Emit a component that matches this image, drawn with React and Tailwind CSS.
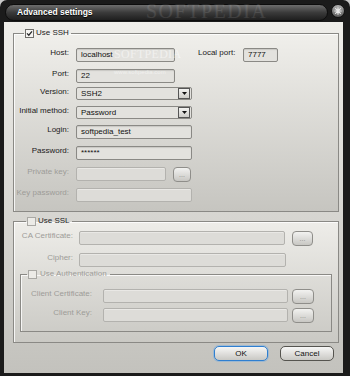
import React from "react";

function Checkbox({ checked, disabled }) {
  return (
    <span
      className={`inline-flex w-[9px] h-[9px] border items-center justify-center shrink-0 ${
        disabled ? "border-[#a9a8a4] bg-[#ecebe7]" : "border-[#6f6e6a] bg-[#f6f5f2]"
      }`}
    >
      {checked && (
        <svg width="7" height="7" viewBox="0 0 7 7">
          <path d="M1 3.4 L2.8 5.2 L6 1.4" stroke="#2a2a2a" strokeWidth="1.3" fill="none" />
        </svg>
      )}
    </span>
  );
}

function Input({ className, text, disabled }) {
  return (
    <div
      className={`h-[14px] border rounded-[2px] flex items-center pl-[4px] leading-[12px] text-[#111] shrink-0 ${
        disabled
          ? "border-[#b3b2ae] bg-[#dddcd8] shadow-[inset_0_1px_0_rgba(255,255,255,0.35)]"
          : "border-[#8a8985] bg-[#e3e2de] shadow-[inset_0_1px_1px_rgba(0,0,0,0.12)]"
      } ${className}`}
    >
      {text}
    </div>
  );
}

function Select({ text }) {
  return (
    <div className="w-[116px] h-[13px] border border-[#8a8985] rounded-[2px] bg-[#e3e2de] flex items-center pl-[4px] pr-[1px] leading-[11px] text-[#111] shrink-0">
      <span className="flex-1">{text}</span>
      <span className="w-[12px] h-[11px] border border-[#555] bg-gradient-to-b from-[#f3f3f1] to-[#cdccc8] flex items-center justify-center">
        <svg width="5" height="3" viewBox="0 0 5 3">
          <path d="M0 0h5L2.5 3z" fill="#111" />
        </svg>
      </span>
    </div>
  );
}

function Browse({ className }) {
  return (
    <div
      className={`h-[15px] rounded-[4px] border border-[#8f8e8a] bg-gradient-to-b from-[#f2f2f0] to-[#c8c7c3] flex items-center justify-center text-[#8a8986] text-[7px] leading-none shrink-0 ${className}`}
    >
      <span className="-mt-[1px]">...</span>
    </div>
  );
}

export default function App() {
  return (
    <div className="relative w-[350px] h-[376px] bg-[#c9c9c9] font-['Liberation_Sans',Arial,sans-serif] text-[8px] overflow-hidden">
      <div className="w-full h-full bg-[#1b1b1b] rounded-t-[7px] flex flex-col">
        {/* Title bar */}
        <div className="h-[22px] shrink-0 flex items-start pt-[4px] pl-[5px] pr-[5px] gap-[3px]">
          <div className="flex-1 h-[17px] rounded-full border border-[#0d0d0d] bg-gradient-to-b from-[#6e6e6e] via-[#3b3b3b] to-[#1f1f1f] flex items-center pl-[11px] text-white font-bold text-[8.5px] leading-none [text-shadow:0_1px_1px_#000]">
            Advanced settings
          </div>
          <svg width="14" height="14" viewBox="0 0 14 14" className="shrink-0">
            <defs>
              <linearGradient id="cg" x1="0" y1="0" x2="0" y2="1">
                <stop offset="0" stopColor="#b5b5b5" />
                <stop offset="1" stopColor="#5a5a5a" />
              </linearGradient>
            </defs>
            <circle cx="7" cy="7" r="6.5" fill="url(#cg)" stroke="#0f0f0f" strokeWidth="1" />
            <path d="M4.6 4.6 L9.4 9.4 M9.4 4.6 L4.6 9.4 M7 3.8 V10.2 M3.8 7 H10.2" stroke="#e9e9e9" strokeWidth="1.2" strokeLinecap="round" />
          </svg>
        </div>

        {/* Content */}
        <div className="flex-1 ml-[4px] mr-[7px] mb-[3px] bg-gradient-to-b from-[#efeeea] to-[#c3c2bd] flex flex-col pl-[9px] pr-[4px] pt-[5px] text-[#1a1a1a]">
          {/* SSH group */}
          <fieldset className="border border-[#8a8985] shadow-[inset_1px_1px_0_rgba(255,255,255,0.8)] bg-gradient-to-b from-[#f0efeb] to-[#c6c5c0] pt-[9px] pb-[9px] px-0 min-w-0">
            <legend className="ml-[10px] pl-[1px] pr-[2px] h-[12px] flex items-center gap-[2px] text-[#222]">
              <Checkbox checked />
              <span className="leading-[12px]">Use SSH</span>
            </legend>

            <div className="flex items-start h-[14px]">
              <span className="w-[55px] text-right leading-[9px]">Host:</span>
              <Input className="ml-[7px] w-[99px]" text="localhost" />
              <span className="ml-[23px] w-[45px] leading-[9px]">Local port:</span>
              <Input className="w-[35px]" text="7777" />
            </div>
            <div className="flex items-start h-[14px] mt-[7px]">
              <span className="w-[55px] text-right leading-[9px]">Port:</span>
              <Input className="ml-[7px] w-[99px]" text="22" />
            </div>
            <div className="flex items-start h-[13px] mt-[4px]">
              <span className="w-[55px] text-right leading-[9px]">Version:</span>
              <div className="ml-[7px]">
                <Select text="SSH2" />
              </div>
            </div>
            <div className="flex items-start h-[13px] mt-[6px]">
              <span className="w-[55px] text-right leading-[9px] whitespace-nowrap">Initial method:</span>
              <div className="ml-[7px]">
                <Select text="Password" />
              </div>
            </div>
            <div className="flex items-start h-[14px] mt-[6px]">
              <span className="w-[55px] text-right leading-[9px]">Login:</span>
              <Input className="ml-[7px] w-[116px]" text="softpedia_test" />
            </div>
            <div className="flex items-start h-[14px] mt-[7px]">
              <span className="w-[55px] text-right leading-[9px]">Password:</span>
              <Input className="ml-[7px] w-[116px]" text="******" />
            </div>
            <div className="flex items-start h-[14px] mt-[7px]">
              <span className="w-[55px] text-right leading-[9px] text-[#9d9c98]">Private key:</span>
              <Input className="ml-[7px] w-[90px]" disabled />
              <Browse className="ml-[7px] w-[18px]" />
            </div>
            <div className="flex items-start h-[14px] mt-[7px]">
              <span className="w-[55px] text-right leading-[9px] text-[#9d9c98] whitespace-nowrap">Key password:</span>
              <Input className="ml-[7px] w-[116px]" disabled />
            </div>
          </fieldset>

          {/* SSL group */}
          <fieldset className="mt-[3px] border border-[#8a8985] shadow-[inset_1px_1px_0_rgba(255,255,255,0.8)] bg-gradient-to-b from-[#eeede9] to-[#cac9c4] pt-[4px] pb-[10px] px-0 min-w-0">
            <legend className="ml-[12px] pl-[1px] pr-[2px] h-[12px] flex items-center gap-[2px] text-[#222]">
              <Checkbox disabled />
              <span className="leading-[12px]">Use SSL</span>
            </legend>

            <div className="flex items-start h-[15px]">
              <span className="w-[59px] text-right leading-[9px] text-[#9d9c98] whitespace-nowrap">CA Certificate:</span>
              <Input className="ml-[6px] w-[206px]" disabled />
              <Browse className="ml-[7px] w-[21px]" />
            </div>
            <div className="flex items-start h-[14px] mt-[7px]">
              <span className="w-[59px] text-right leading-[9px] text-[#9d9c98]">Cipher:</span>
              <Input className="ml-[6px] w-[207px]" disabled />
            </div>

            {/* Authentication group */}
            <fieldset className="mt-[1px] ml-[6px] mr-[6px] border border-[#8a8985] shadow-[inset_1px_1px_0_rgba(255,255,255,0.8)] pt-[9px] pb-[8px] px-0 min-w-0">
              <legend className="ml-[6px] pl-[1px] pr-[3px] h-[12px] flex items-center gap-[3px] text-[#9d9c98]">
                <Checkbox disabled />
                <span className="leading-[12px]">Use Authentication</span>
              </legend>
              <div className="flex items-start h-[15px]">
                <span className="w-[71px] text-right leading-[9px] text-[#9d9c98] whitespace-nowrap">Client Certificate:</span>
                <Input className="ml-[11px] w-[185px]" disabled />
                <Browse className="ml-[4px] w-[22px]" />
              </div>
              <div className="flex items-start h-[15px] mt-[4px]">
                <span className="w-[71px] text-right leading-[9px] text-[#9d9c98]">Client Key:</span>
                <Input className="ml-[11px] w-[185px]" disabled />
                <Browse className="ml-[4px] w-[22px]" />
              </div>
            </fieldset>
          </fieldset>

          {/* Buttons */}
          <div className="mt-[3px] flex justify-end gap-[12px] pr-[5px]">
            <button className="w-[54px] h-[15px] rounded-[5px] border border-[#2f7fd0] bg-gradient-to-b from-[#f7f7f6] to-[#c9c8c4] shadow-[0_0_0_1px_rgba(110,170,230,0.45)] text-[#111] leading-none">
              OK
            </button>
            <button className="w-[54px] h-[15px] rounded-[5px] border border-[#55544f] bg-gradient-to-b from-[#f7f7f6] to-[#c9c8c4] text-[#111] leading-none">
              Cancel
            </button>
          </div>
        </div>
      </div>

      {/* Softpedia watermarks */}
      <div className="absolute left-[146px] top-[1px] font-['Liberation_Serif',serif] text-[20px] leading-none tracking-[1.5px] text-white/10 pointer-events-none">
        SOFTPEDIA
      </div>
      <div className="absolute left-[114px] top-[48px] font-['Liberation_Serif',serif] text-[12px] leading-none tracking-[0.3px] text-white/50 pointer-events-none">
        SOFTPEDIA
      </div>
      <div className="absolute left-[114px] top-[69px] text-[6px] leading-none text-white/50 pointer-events-none">
        www.softpedia.com
      </div>
    </div>
  );
}
